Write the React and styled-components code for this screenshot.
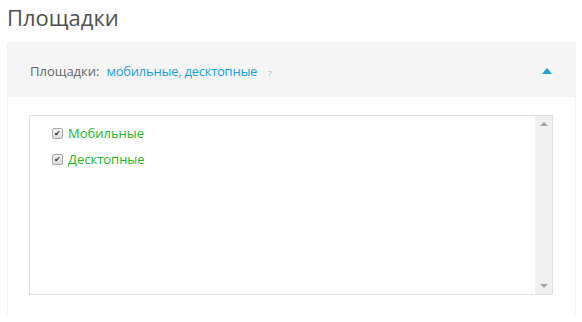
import React from "react";
import styled, { createGlobalStyle } from "styled-components";

const Global = createGlobalStyle`
  html, body { margin: 0; padding: 0; background: #fff; }
  body { font-family: "Open Sans", "Liberation Sans", sans-serif; }
`;

const Page = styled.div`
  padding: 0 7px 0 8px;
  width: 567px;
`;

const Title = styled.h1`
  margin: 0;
  padding: 2px 0 0 0;
  margin-left: -1px;
  font-size: 22px;
  font-weight: 400;
  line-height: 30px;
  color: #505050;
  height: 41px;
`;

const Card = styled.section`
  background: #fff;
  box-shadow: 0 0 2px rgba(0, 0, 0, 0.14);
  border-top: 1px solid #f0f0f0;
`;

const Header = styled.div`
  height: 53px;
  background: #f5f5f5;
  display: flex;
  align-items: center;
  padding: 0 22px;
  font-size: 13px;
`;

const Label = styled.span`
  color: #666;
  margin-right: 7px;
`;

const Value = styled.span`
  color: #1a9fdc;
  letter-spacing: -0.25px;
`;

const Hint = styled.span`
  color: #aaa;
  font-size: 8px;
  margin-left: 11px;
  margin-top: 4px;
`;

const Toggle = styled.span`
  margin-left: auto;
  margin-right: 1px;
  width: 0;
  height: 0;
  border-left: 5px solid transparent;
  border-right: 5px solid transparent;
  border-bottom: 6px solid #1a9fdc;
`;

const Body = styled.div`
  padding: 18px 22px 21px 21px;
`;

const ListBox = styled.div`
  height: 178px;
  border: 1px solid #dedede;
  display: flex;
`;

const Items = styled.ul`
  list-style: none;
  margin: 0;
  padding: 4px 0 0 22px;
  flex: 1;
`;

const Item = styled.li`
  display: flex;
  align-items: center;
  height: 26px;
  font-size: 13px;
  color: #22b822;
`;

const Box = styled.span`
  width: 9px;
  height: 9px;
  border: 1px solid #a8a8a8;
  border-radius: 2px;
  background: linear-gradient(#f4f4f4, #dcdcdc);
  margin-right: 5px;
  display: flex;
  align-items: center;
  justify-content: center;
  font-size: 8px;
  line-height: 1;
  color: #333;
`;

const Scrollbar = styled.div`
  width: 17px;
  background: #f0f0f0;
  display: flex;
  flex-direction: column;
  justify-content: space-between;
  align-items: center;
  padding: 6px 0;
`;

const Arrow = styled.span`
  width: 0;
  height: 0;
  border-left: 4px solid transparent;
  border-right: 4px solid transparent;
  ${(p) =>
    p.$down
      ? "border-top: 4px solid #a3a3a3;"
      : "border-bottom: 4px solid #a3a3a3;"}
`;

const items = ["Мобильные", "Десктопные"];

export default function App() {
  return (
    <>
      <Global />
      <Page>
        <Title>Площадки</Title>
        <Card>
          <Header>
            <Label>Площадки:</Label>
            <Value>мобильные, десктопные</Value>
            <Hint>?</Hint>
            <Toggle />
          </Header>
          <Body>
            <ListBox>
              <Items>
                {items.map((t) => (
                  <Item key={t}>
                    <Box>✔</Box>
                    {t}
                  </Item>
                ))}
              </Items>
              <Scrollbar>
                <Arrow />
                <Arrow $down />
              </Scrollbar>
            </ListBox>
          </Body>
        </Card>
      </Page>
    </>
  );
}
